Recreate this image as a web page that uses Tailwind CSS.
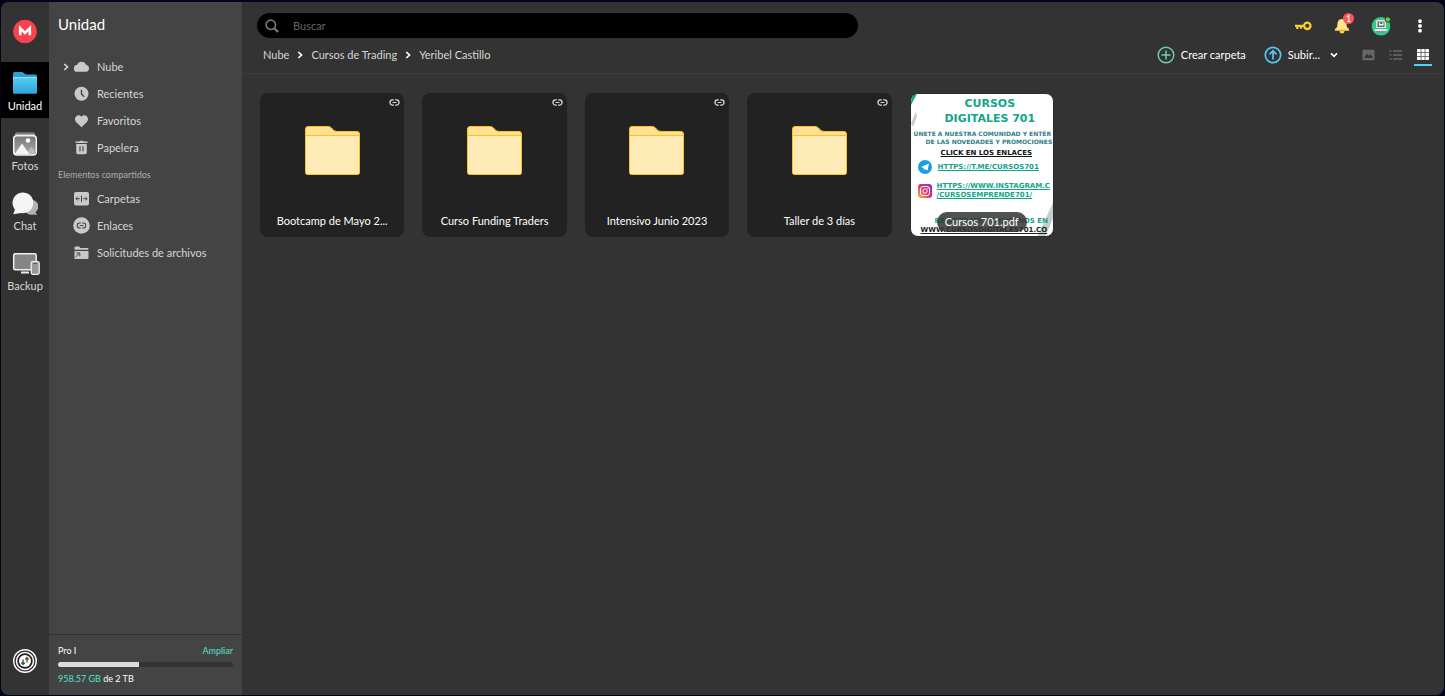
<!DOCTYPE html>
<html lang="es">
<head>
<meta charset="utf-8">
<meta name="viewport" content="width=device-width, initial-scale=1">
<title>Unidad</title>
<script src="https://cdn.jsdelivr.net/npm/@tailwindcss/browser@4"></script>
</head>
<body class="h-screen bg-[#03041a] p-px pt-0.5 font-['Lato',sans-serif] text-[11px] leading-4 text-[#d6d6d6] antialiased">
<svg class="hidden">
  <symbol id="link" viewBox="0 0 12 8"><path d="M5.2 1H3.8a3 3 0 0 0 0 6h1.400M6.800 1h1.400a3 3 0 0 1 0 6H6.800M3.800 4h4.400" fill="none" stroke="currentColor" stroke-width="1.400"/></symbol>
  <symbol id="chev" viewBox="0 0 6 8"><path d="M1.300 1 4.500 4 1.300 7" fill="none" stroke="currentColor" stroke-width="1.700"/></symbol>
  <symbol id="folder" viewBox="0 0 55 50"><path d="M.5 3A2.500 2.500 0 0 1 3 .5H23.500C27 .500 27.500 5.500 32 5.500H52A2.500 2.500 0 0 1 54.500 8V46.500A2 2 0 0 1 52.500 48.500H2.500A2 2 0 0 1 .5 46.500Z" fill="#ffe094" stroke="#fbc21e"/><path d="M1 9.500H54V46.500A1.500 1.500 0 0 1 52.500 48H2.500A1.500 1.500 0 0 1 1 46.500Z" fill="#ffebb5"/><path d="M.5 9.500H54.500" stroke="#fbc21e"/></symbol>
</svg>
<div class="flex h-full overflow-hidden rounded-lg bg-[#333]">

  <nav aria-label="Aplicaciones" class="flex w-12 shrink-0 flex-col items-center bg-[#333]">
    <a href="#" aria-label="MEGA" class="mt-[17px] mb-[19px]">
      <svg class="size-6" viewBox="0 0 24 24"><circle cx="12" cy="12.500" r="11.800" fill="#f9424e"/><path d="M7.200 16.200V9.200L12 14 16.800 9.200V16.200" fill="none" stroke="#fff" stroke-width="2.600"/></svg>
    </a>
    <div class="flex w-full flex-col gap-1 text-[11px]">
      <button class="flex h-14 w-full flex-col items-center justify-end bg-black pb-1 text-white">
        <svg class="mb-1 h-[22px] w-[26px]" viewBox="0 0 26 22"><defs><linearGradient id="bl" x1="0" y1="0" x2="0" y2="1"><stop stop-color="#5accf2"/><stop offset="1" stop-color="#2ba5de"/></linearGradient></defs><path d="M1 1.500A1.500 1.500 0 0 1 2.500 0H10c2 0 2.200 2.500 4.500 2.500h9A1.500 1.500 0 0 1 25 4V9H1Z" fill="#2c9fd0"/><path d="M1 5.500H25V20.500A1.200 1.200 0 0 1 23.800 21.700H2.200A1.200 1.200 0 0 1 1 20.500Z" fill="url(#bl)"/><path d="M1 5.500H25" stroke="#8de0f8"/></svg>
        Unidad
      </button>
      <button class="flex h-14 w-full flex-col items-center justify-end pb-1">
        <svg class="mb-0.5 h-6 w-[26px]" viewBox="0 0 26 24"><defs><linearGradient id="gr" x1="0" y1="0" x2="0" y2="1"><stop stop-color="#777"/><stop offset="1" stop-color="#aaa"/></linearGradient></defs><path d="M4 .7H22" stroke="#666" stroke-width="1.400"/><path d="M3 2.300H23" stroke="#aaa" stroke-width="1.400"/><rect x="1.700" y="3.700" width="22.600" height="19.300" rx="3" fill="url(#gr)" stroke="#f2f2f2" stroke-width="1.500"/><path d="M14 22l5-7 5 5v2Z" fill="#bbb"/><path d="M3 21.500 10 11.500 17.500 22H3Z" fill="#f4f4f4"/><circle cx="16" cy="8.500" r="2.300" fill="#fff"/></svg>
        Fotos
      </button>
      <button class="flex h-14 w-full flex-col items-center justify-end pb-1">
        <svg class="mb-0.5 h-6 w-[26px]" viewBox="0 0 26 24"><path d="M16 9a6.600 6.600 0 0 1 7.500 11l1.500 3-4-.6A7 7 0 0 1 12.500 18Z" fill="#b3b3b3"/><path d="M3 17.500A10.400 10.400 0 1 1 9 21L1.200 22.200Z" fill="#f5f5f5"/></svg>
        Chat
      </button>
      <button class="flex h-14 w-full flex-col items-center justify-end pb-1">
        <svg class="mb-0.5 ml-0.5 h-6 w-[28px]" viewBox="0 0 28 24"><rect x="1.700" y="1.700" width="22.500" height="16" rx="1.500" fill="#858585" stroke="#f0f0f0" stroke-width="1.500"/><path d="M9 20.500H17" stroke="#eee" stroke-width="2"/><rect x="19.200" y="9.700" width="8" height="12.600" rx="1.500" fill="#999" stroke="#eee" stroke-width="1.300"/><path d="M22 11.400h2.500" stroke="#444"/></svg>
        Backup
      </button>
    </div>
    <button aria-label="Transferencias" class="mt-auto mb-[21px]">
      <svg class="size-[26px]" viewBox="0 0 26 26"><circle cx="13" cy="13" r="11.300" fill="none" stroke="#fff" stroke-width="1.400"/><circle cx="13" cy="13" r="8.500" fill="#222" stroke="#fff" stroke-width="1.500"/><circle cx="13" cy="13" r="6" fill="#fff"/><path d="M11 11.500v5M9.300 14.500l1.700 2 1.700-2" fill="none" stroke="#1f5f68" stroke-width="1.400"/><path d="M15 14.500v-5M13.300 11.500 15 9.500l1.700 2" fill="none" stroke="#6a5420" stroke-width="1.400"/></svg>
    </button>
  </nav>

  <aside class="flex w-[193px] shrink-0 flex-col bg-[#444]">
    <h1 class="mt-3 pl-[9px] text-[15px] leading-5 text-white">Unidad</h1>
    <nav aria-label="Unidad" class="mt-[19px] flex flex-col">
      <a href="#" class="flex h-[27px] items-center pl-3.5"><svg class="mr-1 h-2 w-1.5"><use href="#chev"/></svg>
        <svg class="mr-[7px] size-[17px] text-[#c9c9c9]" viewBox="0 0 17 17" fill="currentColor"><path d="M4.500 13.800A3.400 3.400 0 0 1 4 7a4.800 4.800 0 0 1 9-.300 3.600 3.600 0 0 1 0 7.100Z"/></svg>Nube</a>
      <a href="#" class="flex h-[27px] items-center pl-6">
        <svg class="mr-[7px] size-[17px]" viewBox="0 0 17 17"><circle cx="8.500" cy="8.700" r="7" fill="#c9c9c9"/><path d="M8.500 4.700V9l2.600 2.700" fill="none" stroke="#444" stroke-width="1.400"/></svg>Recientes</a>
      <a href="#" class="flex h-[27px] items-center pl-6">
        <svg class="mr-[7px] size-[17px]" viewBox="0 0 17 17"><path d="M8.500 15.200 3.300 10.200C-.6 6 4.800.4 8.500 4.700 12.200.4 17.600 6 13.700 10.200Z" fill="#c9c9c9"/></svg>Favoritos</a>
      <a href="#" class="flex h-[27px] items-center pl-6">
        <svg class="mr-[7px] size-[17px]" viewBox="0 0 17 17"><path d="M2.500 2.500h3.700l.8-.8h3l.8.8h3.700V4h-12ZM3.200 5H13.800V13.500A1.800 1.800 0 0 1 12 15.300H5A1.800 1.800 0 0 1 3.200 13.500Z" fill="#c9c9c9"/><path d="M7 7.300V12.300M10 7.300V12.300" stroke="#555" stroke-width="1.300"/></svg>Papelera</a>
      <h2 class="flex h-6 items-center pt-1 pl-[9px] text-[9px] text-[#adadad]">Elementos compartidos</h2>
      <a href="#" class="flex h-[27px] items-center pl-6">
        <svg class="mr-[7px] size-[17px]" viewBox="0 0 17 17"><rect x="1" y="2" width="15" height="13.500" rx="2" fill="#c9c9c9"/><path d="M8.500 5.500v6.500M2.800 8.700h4M10.200 8.700h4M4.600 7l-1.700 1.700 1.700 1.700M12.400 7l1.700 1.700-1.700 1.700" fill="none" stroke="#444" stroke-width="1"/></svg>Carpetas</a>
      <a href="#" class="flex h-[27px] items-center pl-6">
        <svg class="mr-[7px] size-[17px]" viewBox="0 0 17 17"><circle cx="8.500" cy="8.500" r="8.300" fill="#c9c9c9"/><use href="#link" x="3.500" y="5" width="10" height="7" color="#444"/></svg>Enlaces</a>
      <a href="#" class="flex h-[27px] items-center pl-6">
        <svg class="mr-[7px] size-[17px]" viewBox="0 0 17 17"><path d="M1.500 3.500A1 1 0 0 1 2.500 2.500H6L7.500 4H14.500A1 1 0 0 1 15.500 5V5.800H1.500ZM1.500 7H15.500V14A1 1 0 0 1 14.500 15H1.500Z" fill="#c9c9c9"/><path d="M2.500 13 6.200 9.500M3.300 9H6.800V12.300" fill="none" stroke="#444" stroke-width="1"/></svg>Solicitudes de archivos</a>
    </nav>
    <div class="mt-auto border-t border-[#333] px-[9px] pt-2 pb-2 text-[9px] leading-4 text-white">
      <div class="flex justify-between"><span>Pro I</span><a href="#" class="text-[#4fe3cb]">Ampliar</a></div>
      <div role="progressbar" aria-valuenow="46" aria-valuemin="0" aria-valuemax="100" aria-label="Almacenamiento" class="mt-[3px] mb-1 h-[5px] overflow-hidden rounded-full bg-[#333]"><div class="h-full bg-[#dcdcdc]" style="width:46.5%"></div></div>
      <p><span class="text-[#4fe3cb]">958.57 GB</span> de 2 TB</p>
    </div>
  </aside>

  <main class="flex min-w-0 flex-1 flex-col">
    <header class="flex h-[72px] flex-col border-b border-[#3d3d3d]">
      <div class="mt-[11px] flex h-[25px] items-center">
        <label class="ml-[15px] flex h-full w-1/2 items-center rounded-full bg-black pl-2">
          <svg class="size-3.5 text-[#777]" viewBox="0 0 14 14" fill="none" stroke="currentColor"><circle cx="5.800" cy="5.800" r="4.700" stroke-width="1.700"/><path d="m9 9 4 4" stroke-width="2.400"/></svg>
          <input type="search" aria-label="Buscar" placeholder="Buscar" class="ml-3.5 min-w-0 flex-1 bg-transparent outline-none placeholder:text-[#666]">
        </label>
        <div class="mr-4 ml-auto flex items-center">
          <button aria-label="Clave" class="mr-[22px]"><svg class="h-3 w-[18px]" viewBox="0 0 18 12" fill="none" stroke="#fdcc33" stroke-width="2.300"><circle cx="13.300" cy="5.800" r="3.200"/><path d="M1 5.800H10M3.300 6V9M7 6V8.700"/></svg></button>
          <button aria-label="Notificaciones" class="relative mr-5"><svg class="h-[18px] w-4" viewBox="0 0 16 18"><path d="M8 2c4.500 0 4.500 4.500 4.700 7 .1 2 2.600 2.500 2.600 4.500H.7C.7 11.500 3.200 11 3.300 9 3.500 6.500 3.500 2 8 2Z" fill="#ffe48c"/><path d="M1 11.800H15V13.500H1Z" fill="#ffd75e"/><path d="M5.500 14h5a2.500 2.500 0 0 1-5 0Z" fill="#fcc93c"/></svg><span class="absolute -top-1 -right-1 flex size-[11px] items-center justify-center rounded-full bg-[#f9575a] text-[9px] leading-none text-white">1</span></button>
          <button aria-label="Cuenta" class="mr-5"><svg class="size-[22px]" viewBox="0 0 22 22"><circle cx="11" cy="11.300" r="9.300" fill="#2fcb8b"/><path d="M6 6.500 7 5h8l1 1.500V13H6Z" fill="#e4e6e5"/><path d="M7.500 6.500h7v5.500h-7Z" fill="#5c716a"/><path d="M9 7.500h4.500v3H9Z" fill="#fff"/><path d="M10.200 7.500h2v1.500h-2Z" fill="#384d46"/><path d="M4.500 14h13l-.8 3H5.300Z" fill="#e4e6e5"/><path d="M5.300 16.700H16.700" stroke="#777e7b"/><circle cx="17.800" cy="4.500" r="2.700" fill="#6fcb35" stroke="#333"/></svg></button>
          <button aria-label="Menú" class="w-4"><svg class="mx-auto h-3.5 w-1" viewBox="0 0 4 14" fill="#fff"><rect x=".3" y=".5" width="3.400" height="3.400" rx="1"/><rect x=".3" y="5.300" width="3.400" height="3.400" rx="1"/><rect x=".3" y="10.100" width="3.400" height="3.400" rx="1"/></svg></button>
        </div>
      </div>
      <div class="flex h-[34px] items-center justify-between pr-3 pl-[21px]">
        <nav aria-label="Ruta" class="flex items-center gap-2">
          <a href="#">Nube</a><svg class="h-2 w-1.5 text-white"><use href="#chev"/></svg>
          <a href="#">Cursos de Trading</a><svg class="h-2 w-1.5 text-white"><use href="#chev"/></svg>
          <a href="#">Yeribel Castillo</a>
        </nav>
        <div class="flex items-center text-white">
          <button class="mr-[18px] flex items-center gap-1.5"><svg class="size-[18px]" viewBox="0 0 18 18" fill="none" stroke="#71ceaa" stroke-width="1.500"><circle cx="9" cy="9" r="7.800"/><path d="M9 4.500v9M4.500 9h9"/></svg>Crear carpeta</button>
          <button class="mr-6 flex items-center gap-1.5"><svg class="size-[18px]" viewBox="0 0 18 18" fill="none" stroke="#54c8f5" stroke-width="1.700"><circle cx="9" cy="9" r="7.700"/><path d="M9 13.500V5M5.500 8.300 9 4.800l3.500 3.500"/></svg>Subir...<svg class="ml-1 h-1.5 w-2" viewBox="0 0 8 6"><path d="M1 1.300 4 4.300 7 1.300" fill="none" stroke="#fff" stroke-width="1.700"/></svg></button>
          <button aria-label="Galería" class="mr-3.5"><svg class="h-3 w-[13px]" viewBox="0 0 13 12"><rect x=".5" y=".8" width="12" height="10.500" rx="1" fill="#686868"/><path d="M2 9 5 4.500 7 7l1.500-2L11 9Z" fill="#333"/></svg></button>
          <button aria-label="Lista" class="mr-3"><svg class="h-3 w-[13px]" viewBox="0 0 13 12" stroke="#686868" stroke-width="1.400"><path d="M.5 2H2.500M4 2H13M.5 6H2.500M4 6H13M.5 10H2.500M4 10H13"/></svg></button>
          <button aria-label="Cuadrícula" class="flex h-[21px] w-[18px] items-center justify-center border-b-2 border-[#53d3f5]"><svg class="h-[11px] w-3" viewBox="0 0 12 11"><rect width="12" height="11" rx=".7" fill="#fff"/><path d="M4 0V11M8 0V11M0 3.500H12M0 7.500H12" stroke="#665066" stroke-width=".8"/></svg></button>
        </div>
      </div>
    </header>

    <section aria-label="Archivos" class="mt-[19px] ml-[18px] grid max-w-[794px] grid-cols-5 gap-[18px] text-white">
      <a href="#" class="relative flex aspect-square flex-col items-center rounded-lg bg-[#222] pt-[33px]"><svg class="absolute top-1.5 right-1 h-[7px] w-[11px] text-[#ddd]"><use href="#link"/></svg><svg class="h-[50px] w-[55px]"><use href="#folder"/></svg><span class="mt-auto mb-2">Bootcamp de Mayo 2...</span></a>
      <a href="#" class="relative flex aspect-square flex-col items-center rounded-lg bg-[#222] pt-[33px]"><svg class="absolute top-1.5 right-1 h-[7px] w-[11px] text-[#ddd]"><use href="#link"/></svg><svg class="h-[50px] w-[55px]"><use href="#folder"/></svg><span class="mt-auto mb-2">Curso Funding Traders</span></a>
      <a href="#" class="relative flex aspect-square flex-col items-center rounded-lg bg-[#222] pt-[33px]"><svg class="absolute top-1.5 right-1 h-[7px] w-[11px] text-[#ddd]"><use href="#link"/></svg><svg class="h-[50px] w-[55px]"><use href="#folder"/></svg><span class="mt-auto mb-2">Intensivo Junio 2023</span></a>
      <a href="#" class="relative flex aspect-square flex-col items-center rounded-lg bg-[#222] pt-[33px]"><svg class="absolute top-1.5 right-1 h-[7px] w-[11px] text-[#ddd]"><use href="#link"/></svg><svg class="h-[50px] w-[55px]"><use href="#folder"/></svg><span class="mt-auto mb-2">Taller de 3 días</span></a>
      <a href="#" class="relative aspect-square overflow-hidden rounded-lg border border-[#2b2b2b] bg-white font-['DejaVu_Sans',sans-serif] text-[6px] leading-2 font-bold whitespace-nowrap text-[#12a588]">
        <svg class="absolute inset-0 size-full" viewBox="0 0 143 143"><path d="M0 0H6L0 11Z" fill="#12a588"/><path d="M0 30 5 17 6 23 2 33ZM127 143 143 108V124L135 143Z" fill="#c3cfcd"/></svg>
        <div class="relative flex flex-col">
          <p class="pt-0.5 pl-4 text-center text-[11px] leading-[15px]">CURSOS<br>DIGITALES 701</p>
          <p class="mt-1 pl-[3px] text-[#2b8086]">ÚNETE A NUESTRA COMUNIDAD Y ENTÉR</p>
          <p class="pl-[15px] text-[#2b8086]">DE LAS NOVEDADES Y PROMOCIONES</p>
          <p class="mt-[3px] pl-[30px] text-[7px] text-[#111] underline">CLICK EN LOS ENLACES</p>
          <div class="mt-[3px] flex h-3.5 items-center gap-1.5 pl-[7px]"><svg class="size-3.5" viewBox="0 0 14 14"><circle cx="7" cy="7" r="7" fill="#1b9fdc"/><path d="M3 7 11 3.500 9.500 10.500 7 9 5.800 10.200V8Z" fill="#fff"/></svg><span class="text-[7px] underline">HTTPS://T.ME/CURSOS701</span></div>
          <div class="mt-[7px] flex h-5 items-center gap-[5px] pl-[7px]"><svg class="size-3.5 shrink-0" viewBox="0 0 14 14"><defs><linearGradient id="ig" x1="0" y1="1" x2="1" y2="0"><stop stop-color="#fdba4a"/><stop offset=".5" stop-color="#e02f68"/><stop offset="1" stop-color="#7638d6"/></linearGradient></defs><rect width="14" height="14" rx="3" fill="url(#ig)"/><rect x="2.500" y="2.500" width="9" height="9" rx="2.500" fill="none" stroke="#fff"/><circle cx="7" cy="7" r="2.200" fill="none" stroke="#fff"/><circle cx="9.900" cy="4.200" r=".6" fill="#fff"/></svg><span class="text-[7px] leading-[9px] underline">HTTPS://WWW.INSTAGRAM.C<br>/CURSOSEMPRENDE701/</span></div>
          <p class="mt-4 pl-6 text-[7px] leading-[9px]">REGISTRATE Y VISITANOS EN</p>
          <p class="pl-[10px] text-[7px] leading-[9px] text-[#222] underline">WWW.CURSOSDIGITALES701.CO</p>
        </div>
        <span class="absolute inset-x-0 bottom-1 mx-auto w-fit rounded-full bg-[#333]/85 px-2 py-0.5 font-['Lato',sans-serif] text-[11px] leading-4 font-normal text-white">Cursos 701.pdf</span>
      </a>
    </section>
  </main>
</div>
</body>
</html>
